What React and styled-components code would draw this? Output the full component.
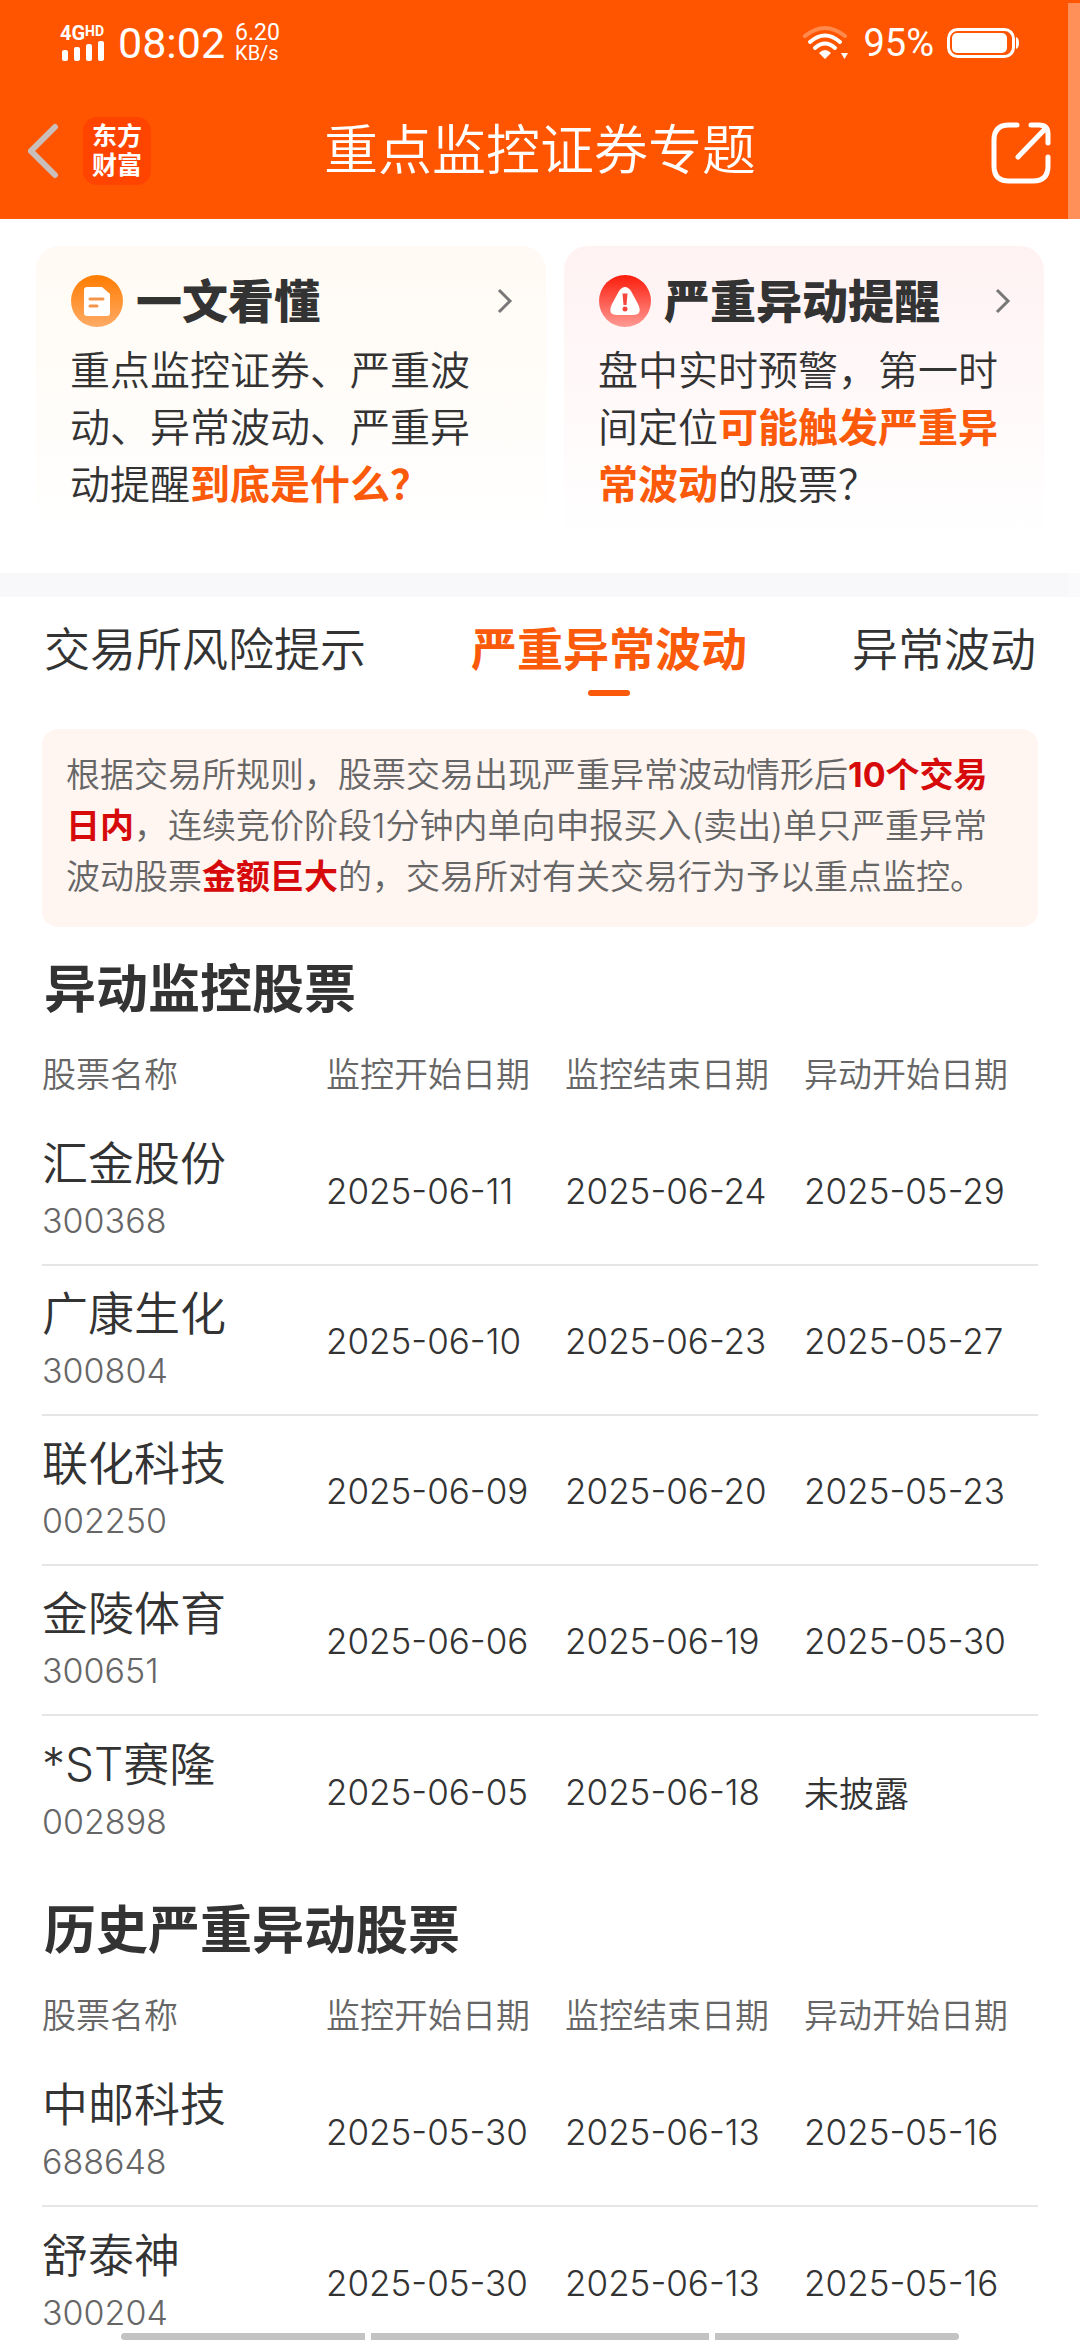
import React from "react"
import styled, { createGlobalStyle } from "styled-components"

const GlobalStyle = createGlobalStyle`
  * { box-sizing: border-box; }
  body {
    margin: 0;
    background: #fff;
    color: #333;
    font-family: Inter, "Noto Sans CJK SC", sans-serif;
    font-weight: 350;
  }
  button { border: 0; padding: 0; background: none; font: inherit; color: inherit; }
`

const Page = styled.div`
  height: 100vh;
  overflow: hidden auto;
  scrollbar-width: none;
`

const Header = styled.header`
  position: sticky;
  top: 0;
  background: #ff5500;
  color: #fff;
`

const StatusBar = styled.div`
  display: flex;
  align-items: center;
  justify-content: space-between;
  height: 82px;
  padding: 4px 60px 0;
  font-family: Roboto, sans-serif;
  font-weight: 400;
`

const StatusGroup = styled.div`
  display: flex;
  align-items: center;
  gap: ${props => props.$gap}px;
`

const Signal = styled.div`
  display: flex;
  flex-direction: column;
  width: 48px;
`

const Network = styled.span`
  display: flex;
  font-size: 20px;
  line-height: 16px;
  font-weight: 700;
  sup {
    font-size: 14px;
    line-height: 12px;
    vertical-align: baseline;
  }
`

const Clock = styled.span`
  font-size: 43px;
  line-height: 44px;
`

const Speed = styled.span`
  display: flex;
  flex-direction: column;
  font-size: ${props => props.$size || 23}px;
  line-height: 20px;
`

const Percent = styled.span`
  font-size: 38px;
  line-height: 40px;
`

const NavBar = styled.div`
  display: grid;
  grid-template-columns: 1fr auto 1fr;
  align-items: center;
  height: 137px;
  padding: 0 28px;
`

const NavLeft = styled.div`
  display: flex;
  align-items: center;
  gap: 24px;
`

const IconButton = styled.button`
  display: flex;
  justify-self: end;
`

const Logo = styled.div`
  width: 68px;
  height: 68px;
  padding: 5px 0;
  border-radius: 14px;
  background: #ff4400;
  text-align: center;
  font-size: 25px;
  line-height: 29px;
  font-weight: 700;
`

const Title = styled.h1`
  margin: 0;
  font-size: 54px;
  line-height: 72px;
  font-weight: 350;
`

const Cards = styled.section`
  display: grid;
  grid-template-columns: 17fr 16fr;
  gap: 18px;
  padding: 27px 36px 33px;
  border-bottom: 24px solid #f8f8fb;
`

const Card = styled.article`
  min-height: 294px;
  padding: 26px 32px 0 34px;
  border-radius: 24px;
  background: linear-gradient(${props => props.$tint}, #fff);
`

const CardHead = styled.div`
  display: flex;
  align-items: center;
  gap: 12px;
  height: 58px;
`

const CardTitle = styled.h2`
  flex: 1;
  margin: 0;
  font-size: 46px;
  line-height: 58px;
  font-weight: 900;
  white-space: nowrap;
`

const CardText = styled.p`
  margin: 12px 0 0;
  padding-right: 8px;
  font-size: 40px;
  line-height: 57px;
`

const Strong = styled.strong`
  color: ${props => props.$color};
  font-weight: 700;
`

const Tabs = styled.nav`
  display: flex;
  justify-content: space-between;
  padding: 18px 44px 0;
`

const Tab = styled.button`
  display: flex;
  flex-direction: column;
  align-items: center;
  height: 114px;
  font-size: 46px;
  line-height: 68px;
  color: ${props => (props.$active ? "#fa5a0a" : "#333")};
  font-weight: ${props => (props.$active ? 700 : 350)};
  &::after {
    content: "";
    width: 42px;
    height: 6px;
    margin-top: 7px;
    border-radius: 3px;
    background: ${props => (props.$active ? "#fa5a0a" : "transparent")};
  }
`

const Main = styled.main`
  padding: 0 42px;
`

const Notice = styled.p`
  margin: 0;
  padding: 20px 24px 25px;
  border-radius: 16px;
  background: #fff5f1;
  color: #666;
  font-size: 34px;
  line-height: 51px;
`

const Heading = styled.h2`
  margin: 0;
  padding: 29px 2px 9px;
  font-size: 52px;
  line-height: 68px;
  font-weight: 700;
`

const Table = styled.table`
  width: 100%;
  margin-bottom: 3px;
  table-layout: fixed;
  border-collapse: collapse;
  font-size: 34px;
  text-align: left;
`

const Th = styled.th`
  width: ${props => props.$width};
  height: 82px;
  padding: 0 0 4px;
  color: #666;
  font-weight: 350;
  white-space: nowrap;
`

const Row = styled.tr`
  height: 150px;
  border-bottom: 2px solid #e6e6e6;
  &:last-child { border-bottom: 0; }
`

const NameCell = styled.td`
  padding: 0;
`

const Name = styled.div`
  font-size: 46px;
  line-height: 62px;
`

const Code = styled.div`
  line-height: 54px;
  color: #666;
`

const DateCell = styled.td`
  padding: 2px 0 0;
  font-size: 35px;
  white-space: nowrap;
`

const ScrollTrack = styled.div`
  position: fixed;
  top: 3px;
  right: 0;
  bottom: 0;
  width: 12px;
  background: rgba(255, 255, 255, 0.35);
`

const GestureBar = styled.div`
  position: fixed;
  bottom: 0;
  left: 0;
  right: 0;
  display: grid;
  grid-template-columns: 244fr 338fr 244fr;
  gap: 6px;
  padding: 0 121px;
  span { height: 7px; background: #c3c3c3; }
  span:first-child { border-radius: 4px 0 0 4px; }
  span:last-child { border-radius: 0 4px 4px 0; }
`

const SignalBars = () => (
  <svg width="48" height="20" viewBox="0 0 48 20" fill="#fff">
    <rect x="2" y="9" width="6" height="11" rx="2" />
    <rect x="14" y="6" width="6" height="14" rx="2" />
    <rect x="26" y="3" width="6" height="17" rx="2" />
    <rect x="38" y="0" width="6" height="20" rx="2" />
  </svg>
)

const Wifi = () => (
  <svg width="48" height="36" viewBox="0 0 48 36" fill="none" strokeWidth="4" strokeLinecap="round">
    <path d="M3 11 Q23 -5 43 11" stroke="#ff8a4d" />
    <path d="M8 17 Q23 4 38 17" stroke="#fff" />
    <path d="M13 23 Q23 14 33 23" stroke="#fff" />
    <path d="M23 34 L17 28 Q23 22 29 28 Z" fill="#fff" />
    <path d="M39 28 H46 L42.500 34 Z" fill="#fff" />
  </svg>
)

const Battery = () => (
  <svg width="73" height="32" viewBox="0 0 73 32">
    <rect x="1.500" y="2.500" width="65" height="27" rx="9" fill="none" stroke="#fff" strokeWidth="3" />
    <rect x="5" y="6" width="55" height="20" rx="5" fill="#fff" />
    <path d="M69 10 Q72 11 72 16 Q72 21 69 22 Z" fill="#fff" />
  </svg>
)

const Back = () => (
  <svg width="31" height="56" viewBox="0 0 31 56" fill="none" stroke="#c9beb9" strokeWidth="6" strokeLinecap="round">
    <path d="M27 4 L3 28 L27 52" />
  </svg>
)

const Share = () => (
  <svg width="62" height="66" viewBox="0 -4 62 66" fill="none" stroke="#fff" strokeWidth="5" strokeLinecap="round" strokeLinejoin="round">
    <path d="M27 3 H19 Q4 3 4 18 V44 Q4 59 19 59 H43 Q58 59 58 44 V35" />
    <path d="M41 3 H49 Q58 3 58 12 V21" />
    <path d="M28 35 L56 6" />
  </svg>
)

const DocIcon = () => (
  <svg width="54" height="54" viewBox="0 0 54 54">
    <defs>
      <linearGradient id="doc" x1="0" y1="0" x2="0" y2="1">
        <stop offset="0" stopColor="#ff7c00" />
        <stop offset="1" stopColor="#ffab66" />
      </linearGradient>
    </defs>
    <circle cx="27" cy="27" r="26" fill="url(#doc)" />
    <path d="M17 13 H32 L40 20 V39 Q40 42 37 42 H17 Q14 42 14 39 V16 Q14 13 17 13 Z" fill="#fff" />
    <path d="M20 25 H33 M20 32 H27" stroke="#f5954a" strokeWidth="3" strokeLinecap="round" />
  </svg>
)

const AlertIcon = () => (
  <svg width="54" height="54" viewBox="0 0 54 54">
    <defs>
      <linearGradient id="alert" x1="0" y1="0" x2="0" y2="1">
        <stop offset="0" stopColor="#fb1c0b" />
        <stop offset="1" stopColor="#ff9a94" />
      </linearGradient>
    </defs>
    <circle cx="27" cy="27" r="26" fill="url(#alert)" />
    <path d="M21 17 Q27 9 33 17 L40 30 Q45 41 35 41 H19 Q9 41 14 30 Z" fill="#fff" />
    <path d="M24.500 19.500 H29.500 L28.500 31 H25.500 Z" fill="#f4473d" />
    <circle cx="27" cy="35" r="2.500" fill="#f4473d" />
  </svg>
)

const Chevron = () => (
  <svg width="18" height="26" viewBox="0 0 18 26" fill="none" stroke="#777" strokeWidth="3">
    <path d="M3 2 L14 13 L3 24" />
  </svg>
)

const monitored = [
  ["汇金股份", "300368", "2025-06-11", "2025-06-24", "2025-05-29"],
  ["广康生化", "300804", "2025-06-10", "2025-06-23", "2025-05-27"],
  ["联化科技", "002250", "2025-06-09", "2025-06-20", "2025-05-23"],
  ["金陵体育", "300651", "2025-06-06", "2025-06-19", "2025-05-30"],
  ["*ST赛隆", "002898", "2025-06-05", "2025-06-18", "未披露"],
]

const history = [
  ["中邮科技", "688648", "2025-05-30", "2025-06-13", "2025-05-16"],
  ["舒泰神", "300204", "2025-05-30", "2025-06-13", "2025-05-16"],
]

const StockTable = (props) => (
  <Table>
    <thead>
      <tr>
        <Th $width="284px">股票名称</Th>
        <Th $width="24%">监控开始日期</Th>
        <Th $width="24%">监控结束日期</Th>
        <Th>异动开始日期</Th>
      </tr>
    </thead>
    <tbody>
      {props.rows.map(([name, code, ...dates]) => (
        <Row key={code}>
          <NameCell>
            <Name>{name}</Name>
            <Code>{code}</Code>
          </NameCell>
          {dates.map((date, i) => <DateCell key={i}>{date}</DateCell>)}
        </Row>
      ))}
    </tbody>
  </Table>
)

const App = () => {
  return (
    <Page>
      <GlobalStyle />
      <Header>
        <StatusBar>
          <StatusGroup $gap={10}>
            <Signal>
              <Network>4G<sup>HD</sup></Network>
              <SignalBars />
            </Signal>
            <Clock>08:02</Clock>
            <Speed>
              <span>6.20</span>
              <Speed as="span" $size={20}>KB/s</Speed>
            </Speed>
          </StatusGroup>
          <StatusGroup $gap={13}>
            <Wifi />
            <Percent>95%</Percent>
            <Battery />
          </StatusGroup>
        </StatusBar>
        <NavBar>
          <NavLeft>
            <IconButton aria-label="返回"><Back /></IconButton>
            <Logo>东方<br />财富</Logo>
          </NavLeft>
          <Title>重点监控证券专题</Title>
          <IconButton aria-label="分享"><Share /></IconButton>
        </NavBar>
      </Header>

      <Cards>
        <Card $tint="#fffaf3">
          <CardHead>
            <DocIcon />
            <CardTitle>一文看懂</CardTitle>
            <Chevron />
          </CardHead>
          <CardText>
            重点监控证券、严重波动、异常波动、严重异动提醒<Strong $color="#fa5a0a">到底是什么？</Strong>
          </CardText>
        </Card>
        <Card $tint="#fff2f3">
          <CardHead>
            <AlertIcon />
            <CardTitle>严重异动提醒</CardTitle>
            <Chevron />
          </CardHead>
          <CardText>
            盘中实时预警，第一时间定位<Strong $color="#fa5a0a">可能触发严重异常波动</Strong>的股票？
          </CardText>
        </Card>
      </Cards>

      <Tabs>
        <Tab>交易所风险提示</Tab>
        <Tab $active>严重异常波动</Tab>
        <Tab>异常波动</Tab>
      </Tabs>

      <Main>
        <Notice>
          根据交易所规则，股票交易出现严重异常波动情形后<Strong $color="#d60a0a">10个交易日内</Strong>，连续竞价阶段1分钟内单向申报买入(卖出)单只严重异常波动股票<Strong $color="#d60a0a">金额巨大</Strong>的，交易所对有关交易行为予以重点监控。
        </Notice>
        <Heading>异动监控股票</Heading>
        <StockTable rows={monitored} />
        <Heading>历史严重异动股票</Heading>
        <StockTable rows={history} />
      </Main>
      <ScrollTrack />
      <GestureBar><span /><span /><span /></GestureBar>
    </Page>
  )
}

export default App
